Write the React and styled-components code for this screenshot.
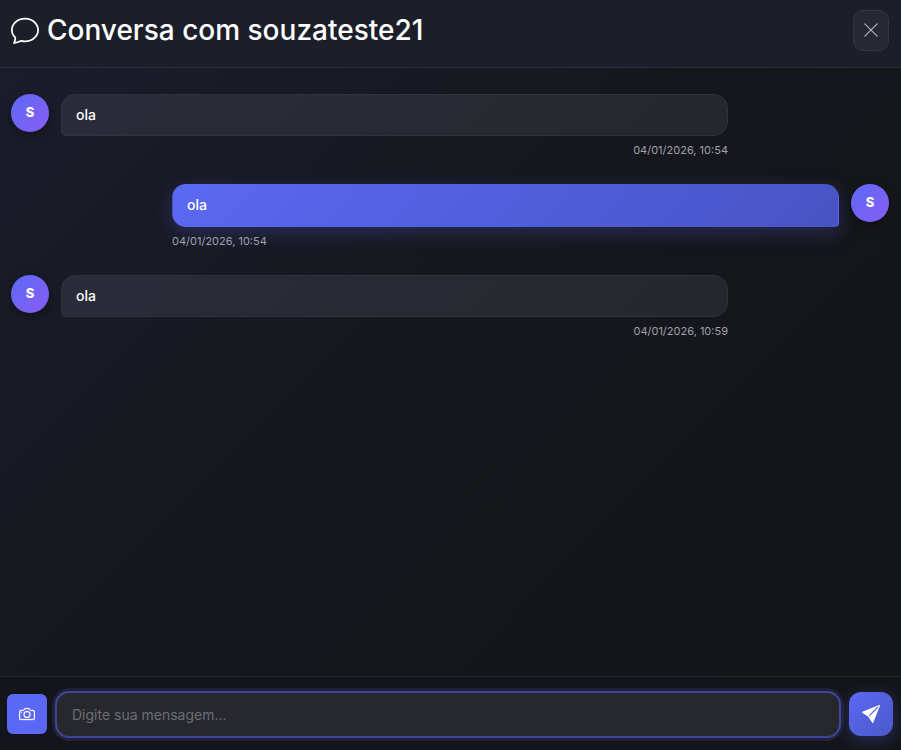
import React from 'react'
import styled, { createGlobalStyle } from 'styled-components';
import { BsChat, BsXLg, BsCamera, BsSendFill } from 'react-icons/bs';

const GlobalStyle = createGlobalStyle`
  html, body {
    margin: 0;
    padding: 0;
    height: 100%;
    background: #141519;
  }
  #root {
    height: 100%;
  }
  * {
    box-sizing: border-box;
  }
`;

const ChatContainer = styled.div`
  display: flex;
  flex-direction: column;
  width: 901px;
  height: 750px;
  overflow: hidden;
  font-family: Inter, "Liberation Sans", sans-serif;
  color: #fff;
  background: linear-gradient(135deg, #1a1d2c 0%, #16171c 50%, #141519 100%);
`;

const Header = styled.header`
  display: flex;
  align-items: center;
  justify-content: space-between;
  flex: 0 0 68px;
  padding: 0 12px 7px 11px;
  background: #1c1f2a;
  border-bottom: 1px solid #2b2e3a;
`;

const Title = styled.h1`
  display: flex;
  align-items: center;
  gap: 8px;
  margin: 0;
  font-size: 28px;
  line-height: 40px;
  font-weight: 500;
  color: #fff;
`;

const CloseButton = styled.button`
  display: flex;
  align-items: center;
  justify-content: center;
  width: 36px;
  height: 41px;
  padding: 0;
  color: #b4b8c4;
  background: #262933;
  border: 1px solid #33363f;
  border-radius: 10px;
`;

const Messages = styled.div`
  display: flex;
  flex: 1;
  flex-direction: column;
  gap: 25px;
  padding: 26px 12px 0 11px;
`;

const Row = styled.div`
  display: flex;
  flex-direction: ${(p) => (p.$mine ? 'row-reverse' : 'row')};
  align-items: flex-start;
  gap: 12px;
`;

const Avatar = styled.div`
  display: flex;
  align-items: center;
  justify-content: center;
  flex: 0 0 38px;
  height: 38px;
  padding-bottom: 2px;
  font-size: 13px;
  font-weight: 800;
  color: #fff;
  border-radius: 50%;
  background: linear-gradient(135deg, #5b6af5 0%, #8b5cf6 100%);
  box-shadow: 0 4px 12px rgba(0, 0, 0, 0.3);
`;

const Content = styled.div`
  display: flex;
  flex-direction: column;
  width: 667px;
`;

const Bubble = styled.div`
  padding: 9px 14px;
  font-size: 14px;
  line-height: 22.4px;
  font-weight: 500;
  color: #fff;
  background: ${(p) => (p.$mine
    ? 'linear-gradient(135deg, #5b68f2 0%, #4854c4 100%)'
    : 'linear-gradient(135deg, #2a2c3a 0%, #26272c 100%)')};
  border: 1px solid ${(p) => (p.$mine ? 'transparent' : '#2f313b')};
  border-radius: ${(p) => (p.$mine ? '14px 14px 4px 14px' : '14px 14px 14px 4px')};
  box-shadow: ${(p) => (p.$mine ? '0 6px 20px rgba(91, 104, 242, 0.25)' : 'none')};
`;

const Time = styled.span`
  margin-top: 5px;
  font-size: 11px;
  line-height: 18px;
  color: #9ca3af;
  text-align: ${(p) => (p.$mine ? 'left' : 'right')};
`;

const InputBar = styled.form`
  display: flex;
  align-items: center;
  gap: 8px;
  flex: 0 0 74px;
  padding: 1px 8px 0 7px;
  background: #14151a;
  border-top: 1px solid #24262d;
`;

const CameraButton = styled.button`
  display: flex;
  align-items: center;
  justify-content: center;
  flex: 0 0 40px;
  height: 40px;
  padding: 0;
  color: #fff;
  background: #5b68f5;
  border: 0;
  border-radius: 6px;
`;

const MessageInput = styled.input`
  flex: 1;
  height: 47px;
  padding: 0 15px;
  font-family: inherit;
  font-size: 14px;
  color: #fff;
  background: #27282d;
  border: 2px solid #3e4795;
  border-radius: 14px;
  box-shadow: 0 0 0 3px rgba(91, 104, 242, 0.15);
  outline: none;
  &::placeholder {
    color: #6c6e75;
    opacity: 1;
  }
`;

const SendButton = styled.button`
  display: flex;
  align-items: center;
  justify-content: center;
  flex: 0 0 44px;
  height: 44px;
  padding: 0;
  color: #fff;
  background: linear-gradient(135deg, #5b68f5 0%, #4c58c8 100%);
  border: 0;
  border-radius: 12px;
  box-shadow: 0 4px 16px rgba(91, 104, 242, 0.3);
`;

const messages = [
  { id: 1, text: 'ola', time: '04/01/2026, 10:54' },
  { id: 2, text: 'ola', time: '04/01/2026, 10:54', mine: true },
  { id: 3, text: 'ola', time: '04/01/2026, 10:59' },
];

const App = () => {
  return (
    <ChatContainer>
      <GlobalStyle />
      <Header>
        <Title>
          <BsChat size={28} />
          Conversa com souzateste21
        </Title>
        <CloseButton type="button" aria-label="Fechar">
          <BsXLg size={18} />
        </CloseButton>
      </Header>
      <Messages>
        {messages.map((m) => (
          <Row key={m.id} $mine={m.mine}>
            <Avatar>S</Avatar>
            <Content>
              <Bubble $mine={m.mine}>{m.text}</Bubble>
              <Time $mine={m.mine}>{m.time}</Time>
            </Content>
          </Row>
        ))}
      </Messages>
      <InputBar>
        <CameraButton type="button" aria-label="Enviar foto">
          <BsCamera size={16} stroke="currentColor" strokeWidth={0.3} />
        </CameraButton>
        <MessageInput placeholder="Digite sua mensagem..." />
        <SendButton type="button" aria-label="Enviar">
          <BsSendFill size={18} />
        </SendButton>
      </InputBar>
    </ChatContainer>
  )
}

export default App
